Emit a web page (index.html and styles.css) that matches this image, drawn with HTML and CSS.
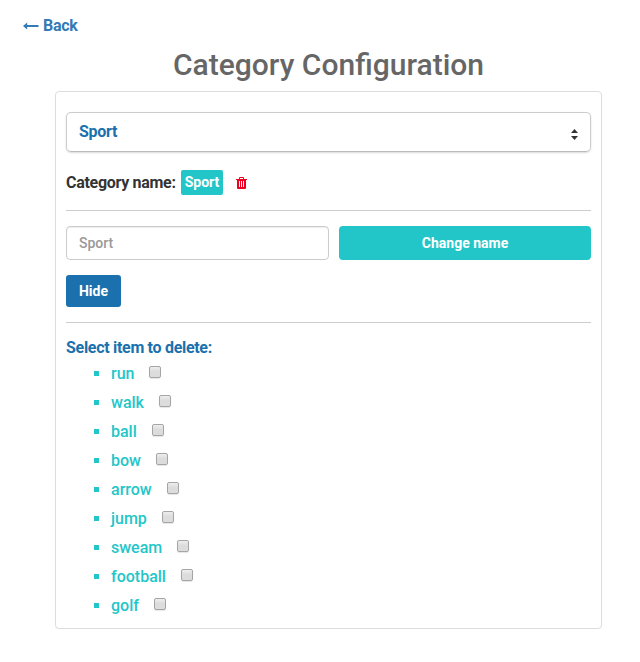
FILE: index.html
```html
<!DOCTYPE html>
<html lang="en">
<head>
<meta charset="utf-8">
<title>Category Configuration</title>
<link rel="stylesheet" href="styles.css">
</head>
<body>
<a class="back"><svg class="arrow" width="16" height="8" viewBox="0 0 16 8"><path d="M0 4 4.2.6v2.5H15.5v1.8H4.2v2.5z"/></svg><span class="back-text">Back</span></a>
<h1 class="title"><span class="title-text">Category Configuration</span></h1>
<main class="panel">
  <div class="select"><span class="select-text">Sport</span><svg width="7" height="11" viewBox="0 0 7 11"><path d="M0 4 3.5 0 7 4zM0 7h7l-3.5 4z"/></svg></div>
  <div class="category"><span class="category-label">Category name:</span><span class="badge">Sport</span><svg class="trash" width="11" height="12" viewBox="0 0 11 12"><path fill-rule="evenodd" d="M3 2V1q0-1 1-1h3q1 0 1 1v1h3v1h-1v8q0 1-1 1H2q-1 0-1-1V3H0V2zM4 1v1h3V1zM3 4v6h1V4zM5 4v6h1V4zM7 4v6h1V4z"/></svg></div>
  <hr class="rule">
  <div class="rename"><input class="field" type="text" placeholder="Sport"><button class="button change">Change name</button></div>
  <button class="button hide">Hide</button>
  <hr class="rule">
  <div class="list-title"><span class="list-title-text">Select item to delete:</span></div>
  <ul class="items">
    <li class="item"><span class="name">run</span><input class="check" type="checkbox"></li>
    <li class="item"><span class="name">walk</span><input class="check" type="checkbox"></li>
    <li class="item"><span class="name">ball</span><input class="check" type="checkbox"></li>
    <li class="item"><span class="name">bow</span><input class="check" type="checkbox"></li>
    <li class="item"><span class="name">arrow</span><input class="check" type="checkbox"></li>
    <li class="item"><span class="name">jump</span><input class="check" type="checkbox"></li>
    <li class="item"><span class="name">sweam</span><input class="check" type="checkbox"></li>
    <li class="item"><span class="name">football</span><input class="check" type="checkbox"></li>
    <li class="item"><span class="name">golf</span><input class="check" type="checkbox"></li>
  </ul>
</main>
</body>
</html>
```
FILE: styles.css
```css
* { box-sizing: border-box; }
body { margin: 0; background: #fff; font: 500 16px/22px Roboto, sans-serif; color: #333; }
svg { display: block; fill: currentColor; flex: none; }
.back { display: flex; align-items: center; height: 22px; margin: 15px 0 0 23px; color: #337ab7; font-weight: 700; }
.arrow { margin-right: 4px; }
.back-text, .select-text, .category-label, .list-title-text { letter-spacing: -0.3px; }
.title { margin: 8px 0 0; padding-left: 17px; height: 40px; font-size: 30px; line-height: 40px; font-weight: 500; text-align: center; color: #666; }
.panel { width: 547px; height: 538px; margin: 6px 0 0 55px; padding: 20px 10px 0; border: 1px solid #ddd; border-radius: 4px; box-shadow: 0 1px 1px rgba(0, 0, 0, .05); }
.select { display: flex; align-items: center; justify-content: space-between; height: 40px; padding: 0 12px; border: 1px solid #ccc; border-bottom-color: #bbb; border-radius: 5px; box-shadow: 0 1px 2px rgba(0, 0, 0, .15); color: #1a71ad; font-weight: 700; }
.select svg { color: #333; margin-top: 4px; }
.category { display: flex; align-items: center; height: 25px; margin-top: 18px; font-weight: 700; }
.badge { height: 25px; padding: 0 4px; margin-left: 5px; border-radius: 2px; background: #23c6c8; color: #fff; font-size: 14px; line-height: 25px; }
.trash { margin: 0 0 0 13px; color: #f00020; }
.rule { height: 1px; margin: 15px 0; border: 0; background: #ccc; }
.rename { display: grid; grid-template-columns: 263px 252px; gap: 10px; }
.field { height: 34px; padding: 0 12px; border: 1px solid #ccc; border-radius: 4px; box-shadow: inset 0 1px 1px rgba(0, 0, 0, .075); font: 500 14px Roboto, sans-serif; }
.field::placeholder { color: #999; opacity: 1; }
.button { display: block; padding: 0; border: 0; border-radius: 4px; color: #fff; font: 700 14px Roboto, sans-serif; }
.change { height: 34px; background: #23c6c8; }
.hide { width: 55px; height: 32px; margin-top: 15px; border-radius: 3px; background: #1a71ad; }
.list-title { height: 22px; margin-top: -1px; color: #1a71ad; font-weight: 700; }
.items { margin: 0; padding: 0 0 0 28px; list-style: none; color: #23c6c8; }
.item { display: flex; align-items: center; height: 29px; }
.item::before { content: ""; width: 5px; height: 5px; margin-right: 12px; background: #23c6c8; }
.check { appearance: none; width: 12px; height: 12px; margin: 0 0 3px 15px; border: 1px solid #a5a5a5; border-radius: 2px; background: linear-gradient(#eee, #dcdcdc 45%); box-shadow: 0 1px 1px rgba(0, 0, 0, .1); }
```
